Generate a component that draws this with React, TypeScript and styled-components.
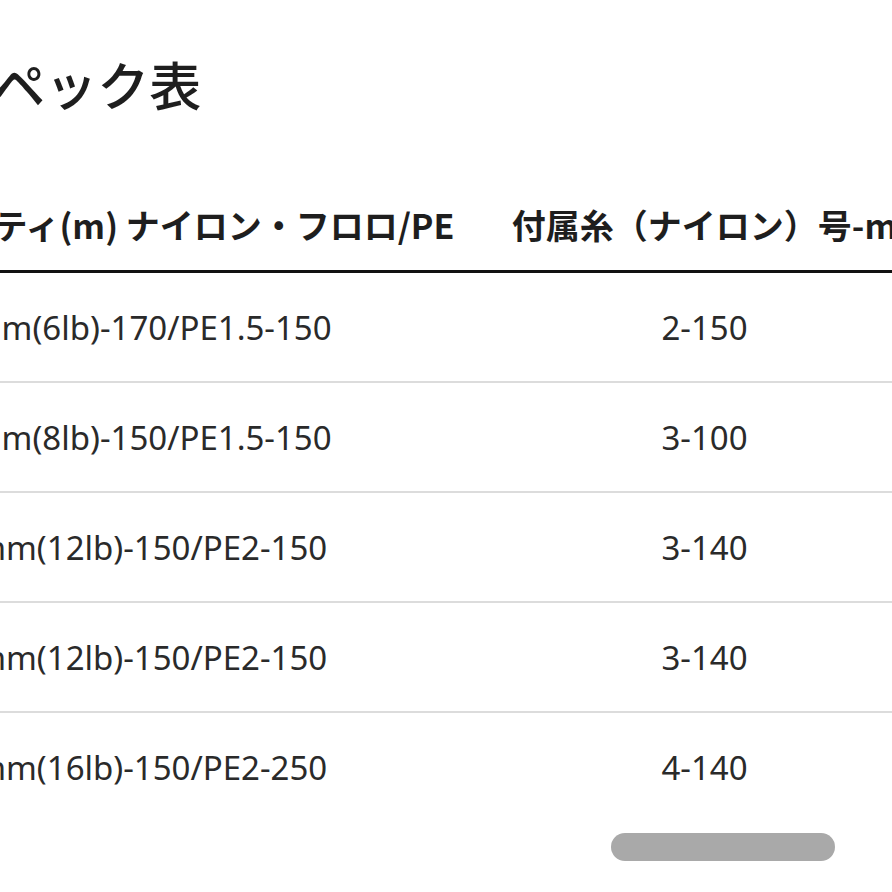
import React from "react";
import styled, { createGlobalStyle } from "styled-components";

const GlobalStyle = createGlobalStyle`
  html, body { margin: 0; padding: 0; background: #ffffff; }
  body { font-family: "Noto Sans", "Noto Sans CJK JP", sans-serif; color: #222; }
`;

const Viewport = styled.div`
  width: 892px;
  height: 892px;
  overflow: hidden;
  background: #fff;
`;

const Content = styled.div`
  margin-left: -266px;
`;

const Title = styled.h2`
  margin: 48px 0 58px 211px;
  font-family: "Noto Sans CJK JP", "Noto Sans", sans-serif;
  font-size: 52px;
  font-weight: 500;
  line-height: 72px;
  color: #1e1e1e;
  white-space: nowrap;
`;

const Table = styled.table`
  border-collapse: collapse;
  table-layout: fixed;
  width: 1191px;
`;

const HeadCell = styled.th<{ $shift?: number }>`
  padding: 0 ${(p) => (p.$shift ? p.$shift : 0)}px 0 0;
  height: 92px;
  border-bottom: 3px solid #111;
  font-family: "Noto Sans CJK JP", "Noto Sans", sans-serif;
  font-size: 34px;
  font-weight: 700;
  color: #1e1e1e;
  text-align: center;
  vertical-align: middle;
  white-space: nowrap;
`;

const Row = styled.tr<{ $last?: boolean }>`
  border-bottom: ${(p) => (p.$last ? "none" : "2px solid #dcdcdc")};
`;

const Cell = styled.td`
  padding: 0;
  height: 108px;
  font-family: "Noto Sans", "Noto Sans CJK JP", sans-serif;
  font-size: 33px;
  font-weight: 400;
  color: #2a2a2a;
  text-align: center;
  vertical-align: middle;
  white-space: nowrap;
`;

const ScrollThumb = styled.div`
  margin: 12px 0 0 611px;
  width: 224px;
  height: 28px;
  border-radius: 14px;
  background: #a9a9a9;
`;

const rows = [
  ["0.205mm(6lb)-170/PE1.5-150", "2-150"],
  ["0.235mm(8lb)-150/PE1.5-150", "3-100"],
  ["0.285mm(12lb)-150/PE2-150", "3-140"],
  ["0.285mm(12lb)-150/PE2-150", "3-140"],
  ["0.330mm(16lb)-150/PE2-250", "4-140"],
];

export default function App() {
  return (
    <Viewport>
      <GlobalStyle />
      <Content>
        <Title>スペック表</Title>
        <Table>
          <colgroup>
            <col style={{ width: 750 }} />
            <col style={{ width: 441 }} />
          </colgroup>
          <thead>
            <tr>
              <HeadCell $shift={8}>ラインキャパシティ(m) ナイロン・フロロ/PE</HeadCell>
              <HeadCell>付属糸（ナイロン）号-m</HeadCell>
            </tr>
          </thead>
          <tbody>
            {rows.map((r, i) => (
              <Row key={i} $last={i === rows.length - 1}>
                <Cell>{r[0]}</Cell>
                <Cell>{r[1]}</Cell>
              </Row>
            ))}
          </tbody>
        </Table>
      </Content>
      <ScrollThumb />
    </Viewport>
  );
}
